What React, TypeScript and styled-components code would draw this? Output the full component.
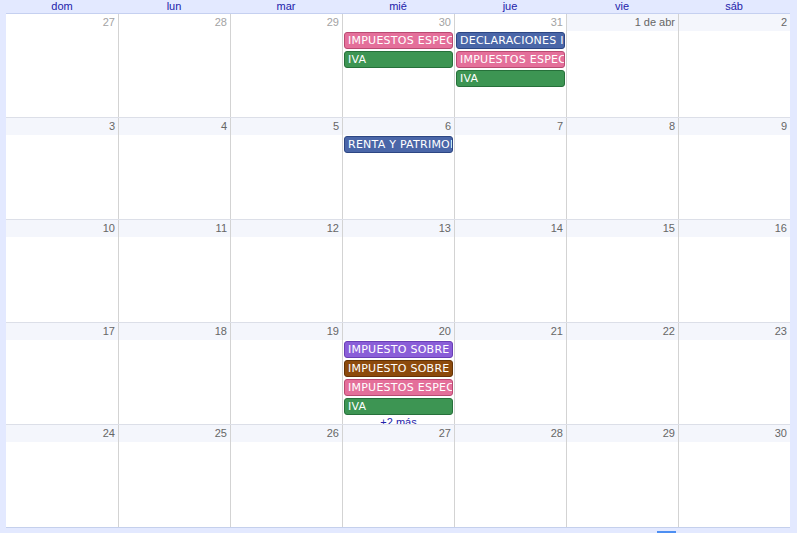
import React from "react";
import styled, { createGlobalStyle } from "styled-components";

const GlobalStyle = createGlobalStyle`
  html, body { margin: 0; padding: 0; background: #e3e9ff; }
  * { box-sizing: border-box; }
`;

type Ev = { title: string; kind: "pink" | "green" | "blue" | "purple" | "brown" };
type Day = { label: string; other?: boolean; events?: Ev[]; more?: string };

const palette: Record<Ev["kind"], { bg: string; border: string }> = {
  pink: { bg: "#e46f9a", border: "#b94a72" },
  green: { bg: "#3d9553", border: "#26703a" },
  blue: { bg: "#4a66a8", border: "#2c4683" },
  purple: { bg: "#8a5ed8", border: "#6a3fb6" },
  brown: { bg: "#8c4a0c", border: "#643306" },
};

const weeks: Day[][] = [
  [
    { label: "27", other: true },
    { label: "28", other: true },
    { label: "29", other: true },
    {
      label: "30",
      other: true,
      events: [
        { title: "IMPUESTOS ESPECIALES", kind: "pink" },
        { title: "IVA", kind: "green" },
      ],
    },
    {
      label: "31",
      other: true,
      events: [
        { title: "DECLARACIONES INFORMATIVAS", kind: "blue" },
        { title: "IMPUESTOS ESPECIALES", kind: "pink" },
        { title: "IVA", kind: "green" },
      ],
    },
    { label: "1 de abr" },
    { label: "2" },
  ],
  [
    { label: "3" },
    { label: "4" },
    { label: "5" },
    { label: "6", events: [{ title: "RENTA Y PATRIMONIO", kind: "blue" }] },
    { label: "7" },
    { label: "8" },
    { label: "9" },
  ],
  [
    { label: "10" },
    { label: "11" },
    { label: "12" },
    { label: "13" },
    { label: "14" },
    { label: "15" },
    { label: "16" },
  ],
  [
    { label: "17" },
    { label: "18" },
    { label: "19" },
    {
      label: "20",
      events: [
        { title: "IMPUESTO SOBRE SOCIEDADES", kind: "purple" },
        { title: "IMPUESTO SOBRE LA RENTA DE NO RESIDENTES", kind: "brown" },
        { title: "IMPUESTOS ESPECIALES", kind: "pink" },
        { title: "IVA", kind: "green" },
      ],
      more: "+2 más",
    },
    { label: "21" },
    { label: "22" },
    { label: "23" },
  ],
  [
    { label: "24" },
    { label: "25" },
    { label: "26" },
    { label: "27" },
    { label: "28" },
    { label: "29" },
    { label: "30" },
  ],
];

const dayNames = ["dom", "lun", "mar", "mié", "jue", "vie", "sáb"];

const Page = styled.div`
  width: 797px;
  height: 533px;
  padding: 0 7px 0 6px;
  background: #e3e9ff;
  display: flex;
  flex-direction: column;
  overflow: hidden;
`;

const HeaderRow = styled.div`
  display: grid;
  grid-template-columns: repeat(7, 112px);
  height: 14px;
  border-bottom: 1px solid #c5d0f0;
`;

const DayName = styled.div`
  font-family: "Liberation Sans", Arial, sans-serif;
  font-size: 11px;
  line-height: 13px;
  color: #2222aa;
  text-align: center;
`;

const MonthGrid = styled.div`
  display: grid;
  grid-template-rows: repeat(5, 1fr);
  height: 514px;
  background: #ffffff;
  border-bottom: 1px solid #c5d0ec;
`;

const Week = styled.div<{ $first?: boolean }>`
  display: grid;
  grid-template-columns: repeat(7, 112px);
  border-top: ${(p) => (p.$first ? "none" : "1px solid #dcdfe8")};
  min-height: 0;
  overflow: hidden;
`;

const Cell = styled.div<{ $first?: boolean }>`
  display: flex;
  flex-direction: column;
  border-left: ${(p) => (p.$first ? "none" : "1px solid #d3d3d3")};
  min-width: 0;
  overflow: hidden;
`;

const DateStrip = styled.div<{ $other?: boolean }>`
  flex: 0 0 17px;
  height: 17px;
  padding-right: 3px;
  text-align: right;
  font-family: "Liberation Sans", Arial, sans-serif;
  font-size: 11px;
  line-height: 17px;
  color: ${(p) => (p.$other ? "#a3a3a3" : "#666666")};
  background: ${(p) => (p.$other ? "#ffffff" : "#f4f6fc")};
`;

const EventList = styled.div`
  display: flex;
  flex-direction: column;
  gap: 2px;
  padding: 1px 1px 0 1px;
`;

const EventChip = styled.div<{ $bg: string; $border: string }>`
  height: 17px;
  padding: 0 3px;
  background: ${(p) => p.$bg};
  border: 1px solid ${(p) => p.$border};
  border-radius: 3px;
  color: #ffffff;
  font-family: "DejaVu Sans", Verdana, sans-serif;
  font-size: 11px;
  letter-spacing: 0.25px;
  line-height: 15px;
  white-space: nowrap;
  overflow: hidden;
`;

const MoreLink = styled.div`
  margin-top: -1px;
  text-align: center;
  font-family: "Liberation Sans", Arial, sans-serif;
  font-size: 11px;
  line-height: 12px;
  color: #2222aa;
`;

const Footer = styled.div`
  flex: 1;
  display: flex;
  align-items: flex-end;
  padding-left: 651px;
`;

const TabMark = styled.div`
  width: 19px;
  height: 2px;
  background: #4d8ff2;
`;

export default function App() {
  return (
    <>
      <GlobalStyle />
      <Page>
        <HeaderRow>
          {dayNames.map((n) => (
            <DayName key={n}>{n}</DayName>
          ))}
        </HeaderRow>
        <MonthGrid>
          {weeks.map((week, wi) => (
            <Week key={wi} $first={wi === 0}>
              {week.map((day, di) => (
                <Cell key={di} $first={di === 0}>
                  <DateStrip $other={day.other}>{day.label}</DateStrip>
                  {day.events && (
                    <EventList>
                      {day.events.map((ev, ei) => (
                        <EventChip
                          key={ei}
                          $bg={palette[ev.kind].bg}
                          $border={palette[ev.kind].border}
                        >
                          {ev.title}
                        </EventChip>
                      ))}
                      {day.more && <MoreLink>{day.more}</MoreLink>}
                    </EventList>
                  )}
                </Cell>
              ))}
            </Week>
          ))}
        </MonthGrid>
        <Footer>
          <TabMark />
        </Footer>
      </Page>
    </>
  );
}
